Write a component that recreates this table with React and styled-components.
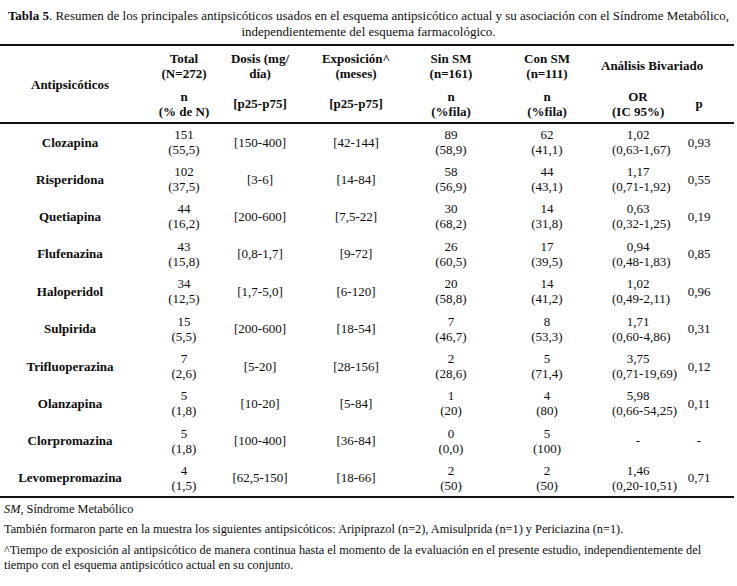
import React from "react";
import styled, {createGlobalStyle} from "styled-components";

const rows = [
    ["Clozapina", "151", "(55,5)", "[150-400]", "[42-144]", "89", "(58,9)", "62", "(41,1)", "1,02", "(0,63-1,67)", "0,93"],
    ["Risperidona", "102", "(37,5)", "[3-6]", "[14-84]", "58", "(56,9)", "44", "(43,1)", "1,17", "(0,71-1,92)", "0,55"],
    ["Quetiapina", "44", "(16,2)", "[200-600]", "[7,5-22]", "30", "(68,2)", "14", "(31,8)", "0,63", "(0,32-1,25)", "0,19"],
    ["Flufenazina", "43", "(15,8)", "[0,8-1,7]", "[9-72]", "26", "(60,5)", "17", "(39,5)", "0,94", "(0,48-1,83)", "0,85"],
    ["Haloperidol", "34", "(12,5)", "[1,7-5,0]", "[6-120]", "20", "(58,8)", "14", "(41,2)", "1,02", "(0,49-2,11)", "0,96"],
    ["Sulpirida", "15", "(5,5)", "[200-600]", "[18-54]", "7", "(46,7)", "8", "(53,3)", "1,71", "(0,60-4,86)", "0,31"],
    ["Trifluoperazina", "7", "(2,6)", "[5-20]", "[28-156]", "2", "(28,6)", "5", "(71,4)", "3,75", "(0,71-19,69)", "0,12"],
    ["Olanzapina", "5", "(1,8)", "[10-20]", "[5-84]", "1", "(20)", "4", "(80)", "5,98", "(0,66-54,25)", "0,11"],
    ["Clorpromazina", "5", "(1,8)", "[100-400]", "[36-84]", "0", "(0,0)", "5", "(100)", "-", "", "-"],
    ["Levomepromazina", "4", "(1,5)", "[62,5-150]", "[18-66]", "2", "(50)", "2", "(50)", "1,46", "(0,20-10,51)", "0,71"],
];

const colWidths = [140, 88, 64, 128, 62, 130, 52, 70];

const Two = ({a, b}) => (
    <>
        {a}
        {b && <br/>}
        {b}
    </>
);

const App = () => {
    return (
        <>
            <GlobalStyle/>
            <StPage>
                <StTitle>
                    <b>Tabla 5</b>. Resumen de los principales antipsicóticos usados en el esquema antipsicótico actual y su asociación con el Síndrome Metabólico,
                    <br/>
                    independientemente del esquema farmacológico.
                </StTitle>
                <StTable>
                    <colgroup>
                        {colWidths.map((w, i) => <col key={i} style={{width: w}}/>)}
                    </colgroup>
                    <thead>
                        <StHeadRow>
                            <StTh rowSpan={2}>Antipsicóticos</StTh>
                            <StTh><Two a="Total" b="(N=272)"/></StTh>
                            <StTh><Two a="Dosis (mg/" b="día)"/></StTh>
                            <StTh><Two a="Exposición^" b="(meses)"/></StTh>
                            <StTh><Two a="Sin SM" b="(n=161)"/></StTh>
                            <StTh><Two a="Con SM" b="(n=111)"/></StTh>
                            <StTh colSpan={2}><StGroupLabel>Análisis Bivariado</StGroupLabel></StTh>
                        </StHeadRow>
                        <StHeadRow $last>
                            <StTh><Two a="n" b="(% de N)"/></StTh>
                            <StTh>[p25-p75]</StTh>
                            <StTh>[p25-p75]</StTh>
                            <StTh><Two a="n" b="(%fila)"/></StTh>
                            <StTh><Two a="n" b="(%fila)"/></StTh>
                            <StTh><Two a="OR" b="(IC 95%)"/></StTh>
                            <StTh>p</StTh>
                        </StHeadRow>
                    </thead>
                    <tbody>
                        {rows.map((r) => (
                            <StRow key={r[0]}>
                                <StName>{r[0]}</StName>
                                <StTd><Two a={r[1]} b={r[2]}/></StTd>
                                <StTd>{r[3]}</StTd>
                                <StTd>{r[4]}</StTd>
                                <StTd><Two a={r[5]} b={r[6]}/></StTd>
                                <StTd><Two a={r[7]} b={r[8]}/></StTd>
                                <StTd><Two a={r[9]} b={r[10]}/></StTd>
                                <StTd>{r[11]}</StTd>
                            </StRow>
                        ))}
                    </tbody>
                </StTable>
                <StNote $top={4}><i>SM</i>, Síndrome Metabólico</StNote>
                <StNote $top={5}>También formaron parte en la muestra los siguientes antipsicóticos: Aripiprazol (n=2), Amisulprida (n=1) y Periciazina (n=1).</StNote>
                <StNote $top={6}>^Tiempo de exposición al antipsicótico de manera continua hasta el momento de la evaluación en el presente estudio, independientemente del tiempo con el esquema antipsicótico actual en su conjunto.</StNote>
            </StPage>
        </>
    )
}

export default App;

const serif = `"Times New Roman", "Liberation Serif", Tinos, serif`;

const GlobalStyle = createGlobalStyle`
    body {
        margin: 0;
        background: #ffffff;
        color: #0d0d0d;
        font-family: ${serif};
    }
`;

const StPage = styled.div`
    width: 737px;
    padding-top: 8px;
    font-family: ${serif};
`;

const StTitle = styled.div`
    font-size: 13px;
    line-height: 16px;
    text-align: center;
    padding: 0 4px;
`;

const StTable = styled.table`
    width: 734px;
    margin-top: 4px;
    border-collapse: collapse;
    table-layout: fixed;
    font-family: ${serif};
    font-size: 13px;
    line-height: 15px;
    border-top: 2px solid #111111;
    border-bottom: 2px solid #111111;
`;

const StHeadRow = styled.tr`
    height: ${props => props.$last ? "38px" : "40px"};
    border-bottom: ${props => props.$last ? "2px solid #111111" : "none"};
`;

const StTh = styled.th`
    padding: 0;
    font-weight: bold;
    text-align: center;
    vertical-align: middle;
    white-space: nowrap;
`;

const StGroupLabel = styled.span`
    display: inline-block;
    margin: 0 31px 0 -11px;
`;

const StRow = styled.tr`
    height: 37.4px;
`;

const StTd = styled.td`
    padding: 0;
    text-align: center;
    vertical-align: middle;
    white-space: nowrap;
`;

const StName = styled(StTd)`
    font-weight: bold;
`;

const StNote = styled.p`
    margin: ${props => props.$top}px 0 0;
    padding: 0 6px 0 4px;
    font-size: 12.3px;
    line-height: 15px;
`;
